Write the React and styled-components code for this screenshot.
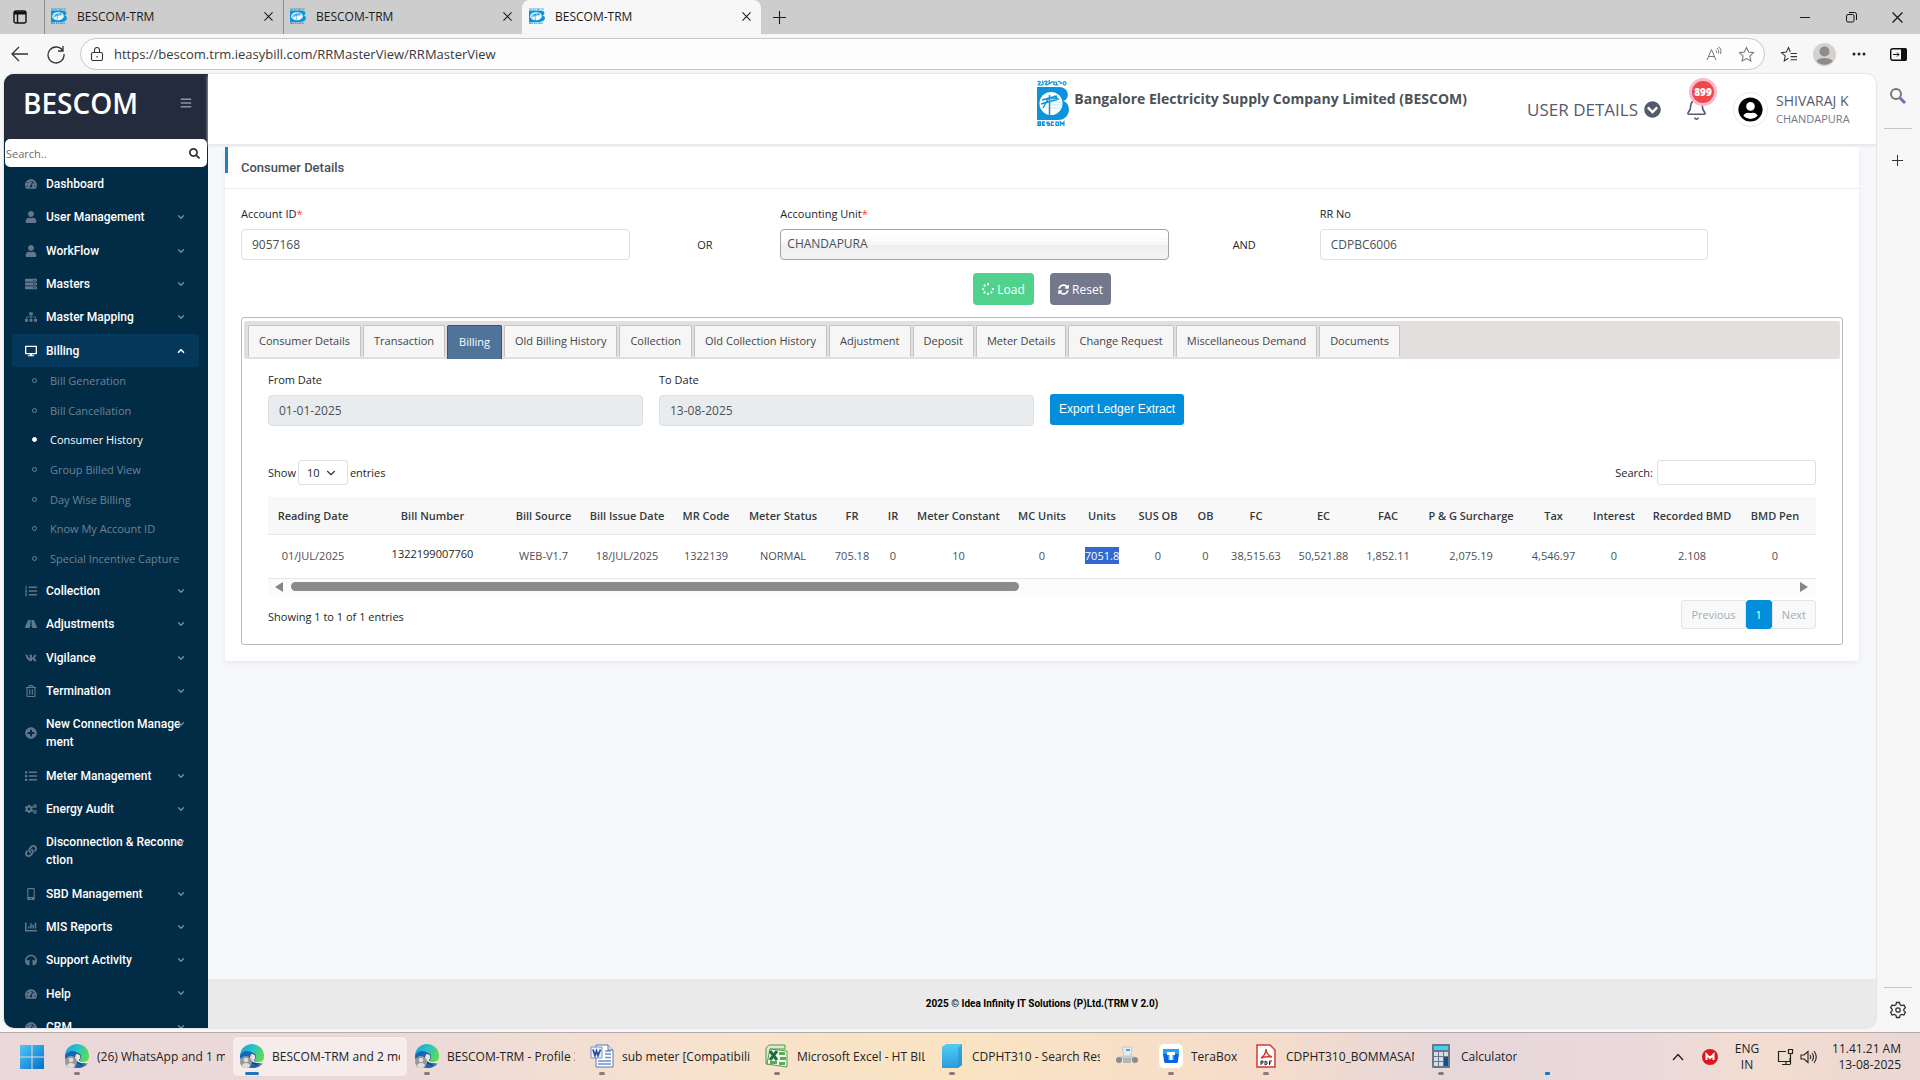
import React from "react";
import styled, { createGlobalStyle, css } from "styled-components";
import {
  FaTachometerAlt, FaUser, FaServer, FaSitemap, FaDesktop, FaListOl, FaRoad, FaVk,
  FaRegTrashAlt, FaPlusCircle, FaList, FaCogs, FaLink, FaMobileAlt, FaChartBar,
  FaHeadphones, FaSearch, FaBars, FaSpinner, FaSyncAlt, FaChevronCircleDown, FaUserCircle,
} from "react-icons/fa";
import { ChevronDown, ChevronUp, Bell } from "lucide-react";

const sans = `"Open Sans", "Noto Sans", sans-serif`;
const roboto = `Roboto, "Open Sans", sans-serif`;

const Global = createGlobalStyle`
  *, *::before, *::after { box-sizing: border-box; }
  html, body { margin: 0; height: 100%; overflow: hidden; }
  body { font-family: ${sans}; font-size: 11px; color: #212529; }
  button, input, select { font: inherit; color: inherit; margin: 0; }
  button { border: 0; background: none; padding: 0; cursor: pointer; }
  ul { list-style: none; margin: 0; padding: 0; }
  a { color: inherit; text-decoration: none; }
  svg { display: block; flex: none; }
`;

const Desktop = styled.div`
  display: flex;
  flex-direction: column;
  height: 100vh;
  background: #f7f7f7;
`;

/* ---------- browser chrome ---------- */

const TabStrip = styled.div`
  display: flex;
  align-items: stretch;
  flex: none;
  height: 34px;
  background: #cdcdcd;
  color: #1b1b1b;
`;

const TabActions = styled.button`
  display: flex;
  align-items: center;
  justify-content: center;
  width: 44px;
  padding-right: 4px;
`;

const BrowserTab = styled.div`
  display: flex;
  align-items: center;
  gap: 10px;
  width: 239px;
  padding: 0 6px 2px;
  font-size: 12px;
  border-left: 1px solid ${(p) => (p.$active ? "#f7f7f7" : "#8d8d8d")};
  border-radius: ${(p) => (p.$active ? "8px 8px 0 0" : "0")};
  background: ${(p) => (p.$active ? "#f7f7f7" : "transparent")};
  span { flex: 1; }
  button { padding: 4px; }
`;

const NewTab = styled.button`
  width: 36px;
  display: flex;
  align-items: center;
  justify-content: center;
`;

const WindowControls = styled.div`
  display: flex;
  margin-left: auto;
  button {
    width: 46px;
    display: flex;
    align-items: center;
    justify-content: center;
  }
`;

const Toolbar = styled.div`
  display: flex;
  align-items: center;
  flex: none;
  height: 40px;
  padding: 0 13px 0 10px;
  color: #333;
`;

const NavButtons = styled.div`
  display: flex;
  gap: 16px;
  width: 70px;
`;

const AddressBar = styled.form`
  display: flex;
  align-items: center;
  flex: 1;
  height: 32px;
  padding: 0 9px;
  gap: 10px;
  border: 1px solid #c8c8c8;
  border-radius: 16px;
  background: #fdfdfd;
  input {
    flex: 1;
    border: 0;
    outline: 0;
    padding: 0;
    background: transparent;
    font-size: 13px;
    color: #3a3a3a;
  }
`;

const BarIcons = styled.div`
  display: flex;
  align-items: center;
  gap: 16px;
`;

const BrowserActions = styled(BarIcons)`
  padding-left: 15px;
  svg:last-child { margin-left: 8px; }
`;

const Middle = styled.div`
  display: flex;
  flex: 1;
  min-height: 0;
  padding-left: 4px;
`;

const Page = styled.div`
  display: flex;
  flex: 1;
  min-width: 0;
  border-radius: 10px;
  overflow: hidden;
  background: #f7f8fb;
  box-shadow: 0 0 2px #b9bcc2;
`;

const EdgeRail = styled.aside`
  display: flex;
  flex-direction: column;
  align-items: center;
  width: 44px;
  padding: 13px 1px 9px 0;
  color: #333;
  hr {
    width: 28px;
    margin: 23px 0 25px;
    border: 0;
    border-top: 1px solid #c6c6c6;
  }
  hr:last-of-type { margin: auto 0 13px; }
`;

/* ---------- sidebar ---------- */

const Sidebar = styled.nav`
  display: flex;
  flex-direction: column;
  flex: none;
  width: 204px;
  background: #022b45;
  font-family: ${roboto};
`;

const Brand = styled.div`
  display: flex;
  align-items: center;
  justify-content: space-between;
  flex: none;
  height: 65px;
  padding: 0 16px 8px 19px;
  background: #242b3d;
  color: #8296a5;
  strong {
    font-family: ${sans};
    font-size: 28px;
    font-weight: 600;
    color: #fff;
  }
`;

const SideSearch = styled.label`
  display: flex;
  align-items: center;
  flex: none;
  height: 28px;
  margin: 0 1px;
  padding: 0 7px 0 1px;
  border-radius: 5px;
  background: #fff;
  color: #333;
  input {
    flex: 1;
    min-width: 0;
    border: 0;
    outline: 0;
    padding: 0;
    background: transparent;
    font-family: ${sans};
    font-size: 11px;
  }
  input::placeholder { color: #6c6c6c; opacity: 1; }
`;

const MenuGroup = styled.ul`
  display: flex;
  flex-direction: column;
  flex: none;
  height: ${(p) => p.$height}px;
`;

const MenuItem = styled.li`
  flex: 1 0 auto;
  display: flex;
  margin: 0 9px 0 8px;
  border-radius: 2px;
  background: ${(p) => (p.$open ? "#05375a" : "transparent")};
`;

const MenuLink = styled.a`
  flex: 1;
  display: grid;
  grid-template-columns: 21px 138px 1fr;
  align-items: center;
  padding: 8px 0 7px 13px;
  line-height: 18px;
  font-size: 12px;
  font-weight: 500;
  color: #fff;
  span { word-break: break-all; }
  > svg:first-child { color: ${(p) => (p.$open ? "#fff" : "#62788a")}; }
  > svg:last-child {
    align-self: start;
    margin-top: 4px;
    margin-left: -8px;
    color: ${(p) => (p.$open ? "#fff" : "#7590a2")};
  }
`;

const SubItem = styled.li`
  flex: 1;
  display: flex;
  a {
    flex: 1;
    display: flex;
    align-items: center;
    gap: 13px;
    padding: 0 0 2px 28px;
    font-family: ${sans};
    font-size: 11px;
    color: ${(p) => (p.$active ? "#fff" : "#6b8495")};
  }
  a::before {
    content: "";
    width: 5px;
    height: 5px;
    border: 1px solid currentColor;
    border-radius: 50%;
    background: ${(p) => (p.$active ? "#fff" : "transparent")};
  }
`;

/* ---------- application ---------- */

const Content = styled.div`
  display: flex;
  flex-direction: column;
  flex: 1;
  min-width: 0;
`;

const AppHeader = styled.header`
  display: flex;
  justify-content: flex-end;
  flex: none;
  height: 70px;
  padding-right: 22px;
  background: #fff;
  box-shadow: 0 2px 3px #e4e6eb;
`;

const Company = styled.div`
  display: flex;
  gap: 5px;
  padding-top: 6px;
  strong {
    padding-top: 9px;
    line-height: 20px;
    font-size: 14px;
    font-weight: 700;
    color: #4d5257;
  }
`;

const UserDetails = styled.button`
  display: flex;
  align-items: center;
  gap: 6px;
  margin-left: 60px;
  font-size: 17px;
  color: #555b6d;
`;

const Alerts = styled.button`
  position: relative;
  display: flex;
  align-items: center;
  margin-left: 24px;
  color: #555b6d;
  span {
    position: absolute;
    left: 4px;
    top: 4px;
    width: 28px;
    height: 28px;
    line-height: 22px;
    border: 3px solid #fbb9cc;
    border-radius: 50%;
    background: #f04848;
    color: #fff;
    font-size: 10px;
    font-weight: 800;
    text-align: center;
  }
`;

const Profile = styled.button`
  display: flex;
  align-items: center;
  gap: 8px;
  margin-left: 25px;
  text-align: left;
  color: #74788d;
  font-size: 11px;
  line-height: 17px;
  strong {
    display: block;
    min-width: 78px;
    font-size: 14px;
    font-weight: 500;
    line-height: 19px;
    color: #555b6d;
  }
`;

const Avatar = styled.span`
  display: flex;
  align-items: center;
  justify-content: center;
  width: 35px;
  height: 35px;
  border: 1px solid #e9e9ef;
  border-radius: 50%;
  color: #000;
`;

const Main = styled.main`
  flex: 1;
  padding: 3px 17px 0;
`;

const Card = styled.section`
  background: #fff;
  border-radius: 3px;
  box-shadow: 0 2px 4px #e6e8ee;
`;

const CardHead = styled.div`
  height: 42px;
  border-bottom: 1px solid #e9e9ef;
  display: flex;
  align-items: flex-start;
  gap: 13px;
  &::before {
    content: "";
    width: 3px;
    height: 26px;
    background: #2283b6;
  }
  h2 {
    margin: 0;
    padding-top: 11px;
    font-family: ${roboto};
    font-size: 13px;
    font-weight: 500;
    line-height: 20px;
    color: #495057;
  }
`;

const CardBody = styled.div`
  padding: 16px;
`;

const FilterGrid = styled.form`
  display: grid;
  grid-template-columns: repeat(12, 1fr);
  column-gap: 16px;
`;

const Field = styled.div`
  grid-column: span 3;
  display: flex;
  flex-direction: column;
  label { line-height: 18px; margin-bottom: 6px; }
  label i { color: #fd3c3c; font-style: normal; }
`;

const control = css`
  width: 100%;
  height: 31px;
  padding: 0 10px;
  border: 1px solid #dcdfe3;
  border-radius: 4px;
  outline: 0;
  font-size: 12px;
  color: #495057;
`;

const TextInput = styled.input`
  ${control}
  background: ${(p) => (p.readOnly ? "#e9ecef" : "#fff")};
`;

const UnitSelect = styled.select`
  ${control}
  appearance: none;
  padding: 0 6px 2px;
  border-color: #a3a3a3;
  background: linear-gradient(#fff 20%, #f6f6f6 50%, #eee 52%, #f4f4f4 100%);
`;

const Joiner = styled.span`
  align-self: end;
  line-height: 31px;
  text-align: center;
`;

const Actions = styled.div`
  display: flex;
  justify-content: center;
  gap: 16px;
  margin: 13px 0 12px;
`;

const ActionButton = styled.button`
  display: flex;
  align-items: center;
  justify-content: center;
  gap: 3px;
  width: 61px;
  height: 32px;
  border-radius: 4px;
  background: ${(p) => p.$bg};
  color: #fff;
  font-size: 12px;
`;

const TabPanel = styled.div`
  padding: 3px 2px 0;
  border: 1px solid #b9b9b9;
  border-radius: 3px;
`;

const TabList = styled.div`
  display: flex;
  gap: 2px;
  height: 38px;
  padding: 4px 4px 0;
  border-radius: 2px;
  background: #e3dfdf;
`;

const TabButton = styled.button`
  height: ${(p) => (p.$active ? 34 : 32)}px;
  padding: 0 ${(p) => (p.$active ? 11 : 10)}px 2px;
  border: 1px solid ${(p) => (p.$active ? "#2350b4" : "#c3c3c3")};
  border-bottom-color: ${(p) => (p.$active ? "#507499" : "#f6f6f6")};
  border-radius: 2px 2px 0 0;
  background: ${(p) => (p.$active ? "#507499" : "#f6f6f6")};
  color: ${(p) => (p.$active ? "#fff" : "#454545")};
  font-size: 11px;
  white-space: nowrap;
`;

const PanelBody = styled.div`
  padding: 12px 24px 15px;
`;

const DateRow = styled.form`
  display: grid;
  grid-template-columns: repeat(12, 1fr);
  column-gap: 16px;
  align-items: end;
`;

const ExportButton = styled.button`
  grid-column: span 3;
  justify-self: start;
  height: 31px;
  margin-bottom: 1px;
  padding: 0 9px 2px;
  border-radius: 3px;
  background: #038edc;
  color: #fff;
  font-family: "Liberation Sans", Arial, sans-serif;
  font-size: 12px;
`;

const TableTools = styled.div`
  display: flex;
  justify-content: space-between;
  align-items: center;
  margin: 34px 0 12px;
`;

const ToolLabel = styled.label`
  display: flex;
  align-items: center;
  gap: ${(p) => p.$gap}px;
`;

const LengthSelect = styled.div`
  display: flex;
  align-items: center;
  select {
    appearance: none;
    width: 50px;
    height: 25px;
    padding: 0 8px;
    border: 1px solid #dcdfe3;
    border-radius: 3px;
    background: #fff;
    font-size: 11px;
  }
  svg { margin-left: -24px; margin-right: 10px; pointer-events: none; }
`;

const SearchInput = styled.input`
  width: 159px;
  height: 25px;
  border: 1px solid #dcdfe3;
  border-radius: 3px;
  outline: 0;
`;

const TableWrap = styled.div`
  overflow: hidden;
`;

const Table = styled.table`
  width: 100%;
  table-layout: fixed;
  border-collapse: collapse;
  text-align: center;
  white-space: nowrap;
  th, td {
    padding: 0;
    border-bottom: 1px solid #e6e7ea;
  }
  th {
    height: 37px;
    background: #f8f8f8;
    color: #343a40;
    font-size: 11px;
    font-weight: 600;
  }
  td {
    height: 44px;
    padding-bottom: 2px;
    color: #495057;
    font-size: 11px;
  }
  td a { color: #212529; display: block; padding-bottom: 4px; }
  mark { background: #3367d1; color: #fff; padding: 1px 0; }
`;

const ScrollTrack = styled.div`
  display: flex;
  align-items: center;
  gap: 8px;
  height: 16px;
  padding: 0 8px 0 7px;
  background: #fbfbfb;
  color: #858585;
`;

const ScrollRail = styled.div`
  flex: 1;
  &::before {
    content: "";
    display: block;
    width: calc(100% * 16 / 33);
    height: 9px;
    border-radius: 5px;
    background: #8b8b8b;
  }
`;

const TableFoot = styled.div`
  display: flex;
  justify-content: space-between;
  align-items: center;
  margin-top: 5px;
  p { margin: 5px 0 0; }
`;

const Pager = styled.div`
  display: flex;
  button {
    height: 29px;
    padding: 0 9px;
    border: 1px solid #e2e5e8;
    background: #f8f9fa;
    color: #a6abb2;
    font-size: 11px;
  }
  button:first-child { border-radius: 3px 0 0 3px; }
  button:last-child { border-radius: 0 3px 3px 0; }
  button[aria-current] {
    border-color: #038edc;
    border-radius: 3px;
    background: #038edc;
    color: #fff;
  }
`;

const Footer = styled.footer`
  flex: none;
  height: 49px;
  line-height: 49px;
  background: #eaeaea;
  text-align: center;
  color: #000;
  font-family: ${roboto};
  font-size: 10px;
  font-weight: 700;
`;

/* ---------- taskbar ---------- */

const Taskbar = styled.footer`
  display: flex;
  align-items: stretch;
  flex: none;
  height: 48px;
  margin-top: 4px;
  padding: 4px 19px 4px 10px;
  border-top: 1px solid #b3abab;
  background: linear-gradient(90deg, #ead8da 0%, #ecdad8 22%, #f7e2ce 36%, #fae4c2 50%, #f5dccb 66%, #e6d7da 75%, #ead9dc 85%, #f3ddd0 92%, #ead6d4 100%);
  color: #222;
  font-size: 12px;
`;

const StartButton = styled.button`
  width: 48px;
  display: flex;
  align-items: center;
  padding-left: 10px;
`;

const Task = styled.button`
  display: flex;
  flex-direction: column;
  width: ${(p) => p.$width}px;
  margin-right: 1px;
  padding: 7px 7px 0;
  border-radius: 4px;
  background: ${(p) => (p.$active ? "#f5eceb" : "transparent")};
  box-shadow: ${(p) => (p.$active ? "0 0 1px #c9b9b9" : "none")};
  &::after {
    content: "";
    width: ${(p) => (p.$active ? 14 : 6)}px;
    height: 3px;
    margin: 4px ${(p) => (p.$active ? 5 : 9)}px 0;
    border-radius: 2px;
    background: ${(p) => (p.$active ? "#1b74c5" : p.$idle ? "transparent" : "#857b7b")};
  }
`;

const TaskLabel = styled.span`
  display: flex;
  align-items: center;
  gap: 8px;
  width: 100%;
  height: 24px;
  white-space: nowrap;
  span { overflow: hidden; }
`;

const Pending = styled.span`
  align-self: flex-end;
  width: 5px;
  height: 3px;
  margin: 0 0 1px -52px;
  border-radius: 1px;
  background: #1b74c5;
`;

const Tray = styled.div`
  display: flex;
  align-items: center;
  margin-left: auto;
  line-height: 16px;
  text-align: center;
`;

const MegaIcon = styled.svg`
  margin-left: 18px;
`;

const Lang = styled.span`
  width: 44px;
  margin: 0 8px 0 7px;
`;

const Clock = styled.time`
  margin-left: 14px;
  text-align: right;
`;

/* ---------- drawings ---------- */

const Logo = ({ w, h }) => (
  <svg width={w} height={h} viewBox="0 0 32 46" preserveAspectRatio="none">
    <g stroke="#0b93dc" strokeWidth="1.2" fill="none">
      <path d="M.5 2c2-1.500 4 0 2 1.500S.5 5 4 5s2-3 1-4M7 2c3-2 4 0 2 1.500s2 2 3 0-1-3 1-3M13 4c3-5 6 0 3 .5M17.500 2c3-1 3 3 0 3h4M21 1.500c4-1 1 3.500 4 1M26 4c0-3 3-3 3-1s-2 2.500-3 1" />
    </g>
    <path d="M0 7h22c11 0 11 13 4 14 9 2 8 19-5 19H0z" fill="#0b93dc" />
    <ellipse cx="14" cy="23.500" rx="11.500" ry="11.500" fill="#fff" />
    <path d="M12.500 15v20M5 20l15-4M4 24l18-5M6 28l5-9 10-1M17 16l4 3" stroke="#0b93dc" strokeWidth="1.500" fill="none" />
    <path d="M13 19h12M13 22h12M13 25h12M13 28h11" stroke="#9fd3f2" strokeWidth="0.600" />
    <g stroke="#0b93dc" strokeWidth="1.300" fill="none">
      <path d="M1 42v3.500h2.500v-3.500zM1 43.800h2.500M8 42H5.500v3.500H8M5.500 43.800h2M12.500 42.200H10v1.500h2.500v1.700H10M17 42.200h-2.500v3.300H17M19 42.200v3.300h2.500v-3.300zM23.500 46v-4l1.700 2 1.700-2v4" />
    </g>
  </svg>
);

const WinLogo = () => (
  <svg width="24" height="24" viewBox="0 0 24 24">
    <defs>
      <linearGradient id="win" x1="0" y1="0" x2="1" y2="1">
        <stop offset="0" stopColor="#4fc8f5" />
        <stop offset="1" stopColor="#0370ca" />
      </linearGradient>
    </defs>
    <path d="M0 0h11.500v11.500H0zM12.500 0H24v11.500H12.500zM0 12.500h11.500V24H0zM12.500 12.500H24V24H12.500z" fill="url(#win)" />
  </svg>
);

const EdgeLogo = () => (
  <svg width="24" height="24" viewBox="0 0 24 24">
    <defs>
      <linearGradient id="edgeTop" x1="0" y1="0" x2="1" y2="0.500">
        <stop offset="0" stopColor="#1b9de2" />
        <stop offset="0.500" stopColor="#2bc3c6" />
        <stop offset="1" stopColor="#62db4c" />
      </linearGradient>
    </defs>
    <circle cx="12" cy="12" r="12" fill="url(#edgeTop)" />
    <path d="M0 12C2 6 9 6 13 9c-5 1-6 8-1 11 4 2 8 1 11-1-5 7-15 6-19 1-2-2-4-5-4-8z" fill="#1467b8" />
    <path d="M13 9c-5 1-6 8-1 11 4 2 8 1 10-2-4 1-8 0-7-3 2-2 1-5-2-6z" fill="#114a8b" />
    <path d="M12 10c4 0 4 4 2 6 0 2 5 3 10 0v2l-2 1c-5 1-12-1-12-5 0-2 1-4 2-4z" fill="#ece0e0" />
    <circle cx="6" cy="18" r="6" fill="#9a9896" />
    <circle cx="6" cy="16" r="2.300" fill="#e0dedc" />
    <path d="M2 22c0-4 8-4 8 0-2 2.500-6 2.500-8 0z" fill="#e0dedc" />
  </svg>
);

const WordLogo = () => (
  <svg width="24" height="24" viewBox="0 0 24 24">
    <path d="M6 1h12l5 5v17H6z" fill="#fff" stroke="#5677b0" />
    <path d="M15 7h6M15 10h6M8 17h13M8 20h13M15 13.500h6" stroke="#6f90c8" strokeWidth="1.500" />
    <path d="M18 1v5h5" fill="#dce6f5" stroke="#5677b0" />
    <path d="M1 3h11v11H1z" fill="#e8f0fc" stroke="#7b93c4" />
    <path d="M3 5.500l2 6 1.500-4.500L8 11.500l2.500-6" stroke="#2b4e9c" strokeWidth="1.800" fill="none" />
  </svg>
);

const ExcelLogo = () => (
  <svg width="24" height="24" viewBox="0 0 24 24">
    <path d="M4 1h16v4H5v15H1V4z" fill="#d7ecd0" stroke="#4f9a4a" />
    <path d="M5 5l17 2v16L2 20z" fill="#f3faf0" stroke="#4f9a4a" />
    <path d="M14 8h6v3h-6zM15 13h6v3h-6zM14 18h6v3h-6zM5 17h7v3H5z" fill="#5cab53" />
    <path d="M5 7l7 9M12 7l-7 9" stroke="#1f7032" strokeWidth="3" />
  </svg>
);

const FolderLogo = () => (
  <svg width="24" height="24" viewBox="0 0 24 24">
    <defs>
      <linearGradient id="note" x1="0" y1="0" x2="0" y2="1">
        <stop offset="0" stopColor="#53cdf4" />
        <stop offset="1" stopColor="#2a9be0" />
      </linearGradient>
    </defs>
    <path d="M6 0h16v21l-4 3H2V3z" fill="url(#note)" />
    <path d="M22 0v21l-4 3V4z" fill="#1f8ccc" opacity="0.500" />
  </svg>
);

const ScannerLogo = () => (
  <svg width="24" height="24" viewBox="0 0 24 24">
    <path d="M7 3h10l-1 9H9z" fill="#e4ebf2" stroke="#c1c8cf" />
    <path d="M11 6h4" stroke="#6d9bd0" strokeWidth="2" />
    <path d="M5 12h14l3 4H2z" fill="#c9ccce" />
    <circle cx="4" cy="16" r="3" fill="#8b8c8e" />
    <circle cx="20" cy="16" r="3" fill="#8b8c8e" />
    <path d="M8 14h8v5H8z" fill="#b3b6b8" />
  </svg>
);

const TeraLogo = () => (
  <svg width="24" height="24" viewBox="0 0 24 24">
    <rect width="24" height="24" rx="5" fill="#fff" />
    <path d="M4 5h16v5h-4.500V9h-7v1H4z" fill="#34b4fb" />
    <path d="M4 5h16v5h-5v6h-6v-6H4z" fill="#20a4f8" />
    <path d="M4 10h5v6h6v-6h5l-1 7c0 1.500-1 2-2 2H7c-1 0-2-.5-2-2z" fill="#0a62e8" />
    <path d="M8 8h8v3h-2.500v5h-3v-5H8z" fill="#fff" />
  </svg>
);

const PdfLogo = () => (
  <svg width="24" height="24" viewBox="0 0 24 24">
    <path d="M3 1h13l5 5v17H3z" fill="#fff" stroke="#d23a32" strokeWidth="1.500" />
    <path d="M7 14c3-2 5-6 5-9 0 4 3 7 6 8-4-.5-7-.5-11 1z" stroke="#e0372e" strokeWidth="1.500" fill="none" />
    <path d="M7 21v-4h2v2H7M11 21v-4l2 1v2l-2 1M15.500 21v-4H18M15.500 19H17" stroke="#222" fill="none" />
  </svg>
);

const CalcLogo = () => (
  <svg width="24" height="24" viewBox="0 0 24 24">
    <rect x="3" width="18" height="24" rx="1" fill="#6a7784" />
    <rect x="5" y="2" width="14" height="4" fill="#45cdf3" />
    <path d="M5 8h4v4H5zM10 8h4v4h-4zM15 8h4v4h-4zM5 13h4v4H5zM10 13h4v4h-4zM5 18h4v4H5zM10 18h4v4h-4z" fill="#d6dde3" />
    <path d="M15 13h4v9h-4z" fill="#114f96" />
  </svg>
);

const Line = ({ w = 16, h = w, box = "0 0 16 16", d, sw = 1, ...rest }) => (
  <svg width={w} height={h} viewBox={box} fill="none" stroke="currentColor" strokeWidth={sw} {...rest}>
    <path d={d} />
  </svg>
);

const STAR = "M8 1.500l2 4.200 4.600.6-3.400 3.200.9 4.600L8 11.900l-4.100 2.200.9-4.600L1.400 6.300 6 5.700z";

/* ---------- data ---------- */

const topMenu = [
  ["Dashboard", FaTachometerAlt, false],
  ["User Management", FaUser, true],
  ["WorkFlow", FaUser, true],
  ["Masters", FaServer, true],
  ["Master Mapping", FaSitemap, true],
  ["Billing", FaDesktop, true],
];

const subMenu = [
  "Bill Generation", "Bill Cancellation", "Consumer History", "Group Billed View",
  "Day Wise Billing", "Know My Account ID", "Special Incentive Capture",
];

const bottomMenu = [
  ["Collection", FaListOl, true],
  ["Adjustments", FaRoad, true],
  ["Vigilance", FaVk, true],
  ["Termination", FaRegTrashAlt, true],
  ["New Connection Management", FaPlusCircle, true],
  ["Meter Management", FaList, true],
  ["Energy Audit", FaCogs, true],
  ["Disconnection & Reconnection", FaLink, true],
  ["SBD Management", FaMobileAlt, true],
  ["MIS Reports", FaChartBar, true],
  ["Support Activity", FaHeadphones, true],
  ["Help", FaTachometerAlt, true],
  ["CRM", FaTachometerAlt, true],
];

const tabs = [
  "Consumer Details", "Transaction", "Billing", "Old Billing History", "Collection",
  "Old Collection History", "Adjustment", "Deposit", "Meter Details", "Change Request",
  "Miscellaneous Demand", "Documents",
];

const columns = [
  ["Reading Date", 90, "01/JUL/2025"],
  ["Bill Number", 149, "1322199007760"],
  ["Bill Source", 73, "WEB-V1.7"],
  ["Bill Issue Date", 94, "18/JUL/2025"],
  ["MR Code", 64, "1322139"],
  ["Meter Status", 90, "NORMAL"],
  ["FR", 48, "705.18"],
  ["IR", 34, "0"],
  ["Meter Constant", 97, "10"],
  ["MC Units", 70, "0"],
  ["Units", 50, "7051.8"],
  ["SUS OB", 62, "0"],
  ["OB", 33, "0"],
  ["FC", 68, "38,515.63"],
  ["EC", 67, "50,521.88"],
  ["FAC", 62, "1,852.11"],
  ["P & G Surcharge", 104, "2,075.19"],
  ["Tax", 61, "4,546.97"],
  ["Interest", 60, "0"],
  ["Recorded BMD", 96, "2.108"],
  ["BMD Pen", 70, "0"],
];

const tasks = [
  [EdgeLogo, "(26) WhatsApp and 1 more page", 174],
  [EdgeLogo, "BESCOM-TRM and 2 more pages", 174, true],
  [EdgeLogo, "BESCOM-TRM - Profile 3", 174],
  [WordLogo, "sub meter [Compatibility Mode]", 174],
  [ExcelLogo, "Microsoft Excel - HT BILLING", 174],
  [FolderLogo, "CDPHT310 - Search Results", 174],
  [ScannerLogo, "", 43],
  [TeraLogo, "TeraBox", 94],
  [PdfLogo, "CDPHT310_BOMMASANDRA", 174],
  [CalcLogo, "Calculator", 174],
];

const MenuRow = ({ label, icon: Icon, arrow, open }) => (
  <MenuItem $open={open}>
    <MenuLink href="#" $open={open}>
      <Icon size={12} />
      <span>{label}</span>
      {arrow ? open ? <ChevronUp size={10} strokeWidth={4} /> : <ChevronDown size={10} strokeWidth={3} /> : null}
    </MenuLink>
  </MenuItem>
);

const CloseX = ({ size = 10 }) => <Line w={size} box="0 0 10 10" d="M.5.5l9 9M9.500.5l-9 9" sw={1.2} />;

function Browser() {
  return (
    <>
      <TabStrip>
        <TabActions aria-label="Tab actions">
          <svg width="14" height="14" viewBox="0 0 14 14" fill="none" stroke="#111">
            <rect x="1" y="1" width="12" height="12" rx="2" strokeWidth="1.400" />
            <path d="M1 3h12" strokeWidth="3" />
            <path d="M4.500 3v10" strokeWidth="1.400" />
          </svg>
        </TabActions>
        {[false, false, true].map((active, i) => (
          <BrowserTab key={i} $active={active}>
            <Logo w={16} h={16} />
            <span>BESCOM-TRM</span>
            <button aria-label="Close tab"><CloseX size={9} /></button>
          </BrowserTab>
        ))}
        <NewTab aria-label="New tab"><Line w={13} box="0 0 14 14" d="M7 0v14M0 7h14" sw={1.2} /></NewTab>
        <WindowControls>
          <button aria-label="Minimise"><Line w={10} box="0 0 10 10" d="M0 5.500h10" /></button>
          <button aria-label="Restore">
            <svg width="11" height="11" viewBox="0 0 11 11" fill="none" stroke="#111">
              <rect x="0.500" y="2.500" width="7.500" height="7.500" rx="1.500" />
              <path d="M3 .5h5.500a2 2 0 012 2V8" />
            </svg>
          </button>
          <button aria-label="Close"><CloseX size={11} /></button>
        </WindowControls>
      </TabStrip>
      <Toolbar>
        <NavButtons>
          <button aria-label="Back"><Line w={20} box="0 0 20 20" d="M18 10H2M9 3l-7 7 7 7" sw={1.3} /></button>
          <button aria-label="Refresh"><Line w={20} box="0 0 20 20" d="M17 7A8 8 0 1 0 18 10M17 2v5h-5" sw={1.3} /></button>
        </NavButtons>
        <AddressBar>
          <Line w={14} box="0 0 14 14" d="M3 5.500h8q1.500 0 1.500 1.500v5q0 1.500-1.500 1.500H3q-1.500 0-1.500-1.500V7q0-1.500 1.500-1.500zM4.500 5.500V3q0-2.500 2.500-2.500T9.500 3v2.500M7 9v1.500" sw={1.1} />
          <input aria-label="Address" defaultValue="https://bescom.trm.ieasybill.com/RRMasterView/RRMasterView" />
          <BarIcons>
            <Line w={16} box="0 0 16 16" d="M1 14L5.500 3.500 10 14M2.500 10.500h6M9.500 4c1 .7 1.300 2 1 3M11 2c1.800 1.500 2 3.500 1.500 5.500M12.500.5c2.500 2 3 4.500 2 7.500" stroke="#777" />
            <Line w={17} d={STAR} stroke="#777" />
          </BarIcons>
        </AddressBar>
        <BrowserActions>
          <Line w={17} d="M8 11.500L4 14l.9-4.700L1.400 6.300 6 5.700l2-4.200 1.700 4.200M10 7h6M10 10h6M10 13h6" />
          <svg width="23" height="23" viewBox="0 0 23 23">
            <circle cx="11.500" cy="11.500" r="11.500" fill="#d4d2d0" />
            <circle cx="11.500" cy="8.500" r="5" fill="#8e8b88" />
            <path d="M3.500 18c2-4 14-4 16 0-4 5-12 5-16 0z" fill="#8e8b88" />
          </svg>
          <svg width="14" height="4" viewBox="0 0 14 4" fill="#222">
            <circle cx="2" cy="2" r="1.500" /><circle cx="7" cy="2" r="1.500" /><circle cx="12" cy="2" r="1.500" />
          </svg>
          <svg width="17" height="13" viewBox="0 0 17 13">
            <rect x="0.700" y="0.700" width="15.600" height="11.600" rx="2" fill="none" stroke="#111" strokeWidth="1.400" />
            <path d="M11 0h4q2 0 2 2v9q0 2-2 2h-4z" fill="#111" />
            <path d="M3 6.500h6M7 4.500l2 2-2 2" stroke="#111" fill="none" />
          </svg>
        </BrowserActions>
      </Toolbar>
    </>
  );
}

function SideNav() {
  return (
    <Sidebar>
      <Brand>
        <strong>BESCOM</strong>
        <button aria-label="Toggle menu"><FaBars size={12} color="#8296a5" /></button>
      </Brand>
      <SideSearch>
        <input aria-label="Search menu" placeholder="Search.." />
        <FaSearch size={11} />
      </SideSearch>
      <MenuGroup $height={200}>
        {topMenu.map(([label, icon, arrow]) => (
          <MenuRow key={label} label={label} icon={icon} arrow={arrow} open={label === "Billing"} />
        ))}
      </MenuGroup>
      <MenuGroup $height={207}>
        {subMenu.map((label) => (
          <SubItem key={label} $active={label === "Consumer History"}><a href="#">{label}</a></SubItem>
        ))}
      </MenuGroup>
      <MenuGroup $height={469}>
        {bottomMenu.map(([label, icon, arrow]) => (
          <MenuRow key={label} label={label} icon={icon} arrow={arrow} />
        ))}
      </MenuGroup>
    </Sidebar>
  );
}

function Header() {
  return (
    <AppHeader>
      <Company>
        <Logo w={32} h={46} />
        <strong>Bangalore Electricity Supply Company Limited (BESCOM)</strong>
      </Company>
      <UserDetails>USER DETAILS <FaChevronCircleDown size={17} /></UserDetails>
      <Alerts aria-label="Notifications">
        <Bell size={23} strokeWidth={1.7} />
        <span>899</span>
      </Alerts>
      <Profile>
        <Avatar><FaUserCircle size={25} /></Avatar>
        <span><strong>SHIVARAJ K</strong>CHANDAPURA</span>
      </Profile>
    </AppHeader>
  );
}

function Billing() {
  return (
    <PanelBody>
      <DateRow>
        <Field>
          <label htmlFor="from">From Date</label>
          <TextInput id="from" readOnly value="01-01-2025" />
        </Field>
        <Field>
          <label htmlFor="to">To Date</label>
          <TextInput id="to" readOnly value="13-08-2025" />
        </Field>
        <ExportButton type="button">Export Ledger Extract</ExportButton>
      </DateRow>
      <TableTools>
        <ToolLabel $gap={2}>
          Show
          <LengthSelect>
            <select defaultValue="10"><option>10</option></select>
            <ChevronDown size={14} color="#343a40" />
          </LengthSelect>
          entries
        </ToolLabel>
        <ToolLabel $gap={4}>Search: <SearchInput /></ToolLabel>
      </TableTools>
      <TableWrap>
        <Table>
          <colgroup>
            {columns.map(([name, width]) => <col key={name} width={width} />)}
            <col />
          </colgroup>
          <thead>
            <tr>
              {columns.map(([name]) => <th key={name}>{name}</th>)}
              <th />
            </tr>
          </thead>
          <tbody>
            <tr>
              {columns.map(([name, , value]) => (
                <td key={name}>
                  {name === "Bill Number" ? <a href="#">{value}</a> : name === "Units" ? <mark>{value}</mark> : value}
                </td>
              ))}
              <td />
            </tr>
          </tbody>
        </Table>
        <ScrollTrack>
          <svg width="8" height="10" viewBox="0 0 8 10"><path d="M8 0v10L0 5z" fill="currentColor" /></svg>
          <ScrollRail />
          <svg width="8" height="10" viewBox="0 0 8 10"><path d="M0 0v10l8-5z" fill="currentColor" /></svg>
        </ScrollTrack>
      </TableWrap>
      <TableFoot>
        <p>Showing 1 to 1 of 1 entries</p>
        <Pager>
          <button>Previous</button>
          <button aria-current="page">1</button>
          <button>Next</button>
        </Pager>
      </TableFoot>
    </PanelBody>
  );
}

function ConsumerDetails() {
  return (
    <Card>
      <CardHead><h2>Consumer Details</h2></CardHead>
      <CardBody>
        <FilterGrid>
          <Field>
            <label htmlFor="account">Account ID<i>*</i></label>
            <TextInput id="account" defaultValue="9057168" />
          </Field>
          <Joiner>OR</Joiner>
          <Field>
            <label htmlFor="unit">Accounting Unit<i>*</i></label>
            <UnitSelect id="unit" defaultValue="CHANDAPURA"><option>CHANDAPURA</option></UnitSelect>
          </Field>
          <Joiner>AND</Joiner>
          <Field>
            <label htmlFor="rr">RR No</label>
            <TextInput id="rr" defaultValue="CDPBC6006" />
          </Field>
        </FilterGrid>
        <Actions>
          <ActionButton $bg="#51d28c"><FaSpinner size={12} />Load</ActionButton>
          <ActionButton $bg="#74788d"><FaSyncAlt size={11} />Reset</ActionButton>
        </Actions>
        <TabPanel>
          <TabList role="tablist">
            {tabs.map((t) => (
              <TabButton key={t} role="tab" aria-selected={t === "Billing"} $active={t === "Billing"}>{t}</TabButton>
            ))}
          </TabList>
          <Billing />
        </TabPanel>
      </CardBody>
    </Card>
  );
}

function SystemBar() {
  return (
    <Taskbar>
      <StartButton aria-label="Start"><WinLogo /></StartButton>
      {tasks.map(([Icon, label, width, active], i) => (
        <Task key={i} $width={width} $active={active} $idle={!label}>
          <TaskLabel><Icon />{label ? <span>{label}</span> : null}</TaskLabel>
        </Task>
      ))}
      <Pending />
      <Tray>
        <Line w={12} h={8} box="0 0 12 8" d="M1 7l5-5.500L11 7" sw={1.4} />
        <MegaIcon width="16" height="16" viewBox="0 0 16 16">
          <circle cx="8" cy="8" r="8" fill="#e3141d" />
          <path d="M4.500 11V5.500L8 9l3.500-3.500V11" fill="none" stroke="#fff" strokeWidth="2" />
        </MegaIcon>
        <Lang>ENG<br />IN</Lang>
        <Line w={18} box="0 0 18 18" d="M9 3.500H1.500v10H13V10M5 16.500h8M9 13.500v3M11.500 1.500h4v4h-4zM13.500 5.500v11" sw={1.2} />
        <Line w={23} h={16} box="3 0 23 16" d="M9 6h3l4-3.500v11L12 10H9zM18 6q1.500 2 0 4M20 4q3 4 0 8M22 2q4.500 6 0 12" sw={1.1} />
        <Clock>11.41.21 AM<br />13-08-2025</Clock>
      </Tray>
    </Taskbar>
  );
}

export default function App() {
  return (
    <Desktop>
      <Global />
      <Browser />
      <Middle>
        <Page>
          <SideNav />
          <Content>
            <Header />
            <Main><ConsumerDetails /></Main>
            <Footer>2025 © Idea Infinity IT Solutions (P)Ltd.(TRM V 2.0)</Footer>
          </Content>
        </Page>
        <EdgeRail>
          <svg width="18" height="18" viewBox="0 0 18 18" fill="none">
            <circle cx="7" cy="7" r="5" stroke="#777" strokeWidth="2" />
            <path d="M11 11l5 5" stroke="#8661c5" strokeWidth="3" />
          </svg>
          <hr />
          <Line w={13} box="0 0 14 14" d="M7 1v12M1 7h12" sw={1.1} />
          <hr />
          <Line
            w={18}
            box="0 0 18 18"
            sw={1.3}
            d="M7.500 1.500h3l.6 2.200 1.600.9 2.200-.6 1.500 2.600-1.600 1.600v1.600l1.600 1.600-1.500 2.600-2.200-.6-1.600.9-.6 2.200h-3l-.6-2.200-1.600-.9-2.200.6-1.500-2.600 1.600-1.600V8.200L1.600 6.600 3.100 4l2.200.6 1.600-.9zM9 6.800a2.200 2.200 0 100 4.400 2.200 2.200 0 000-4.400z"
          />
        </EdgeRail>
      </Middle>
      <SystemBar />
    </Desktop>
  );
}
